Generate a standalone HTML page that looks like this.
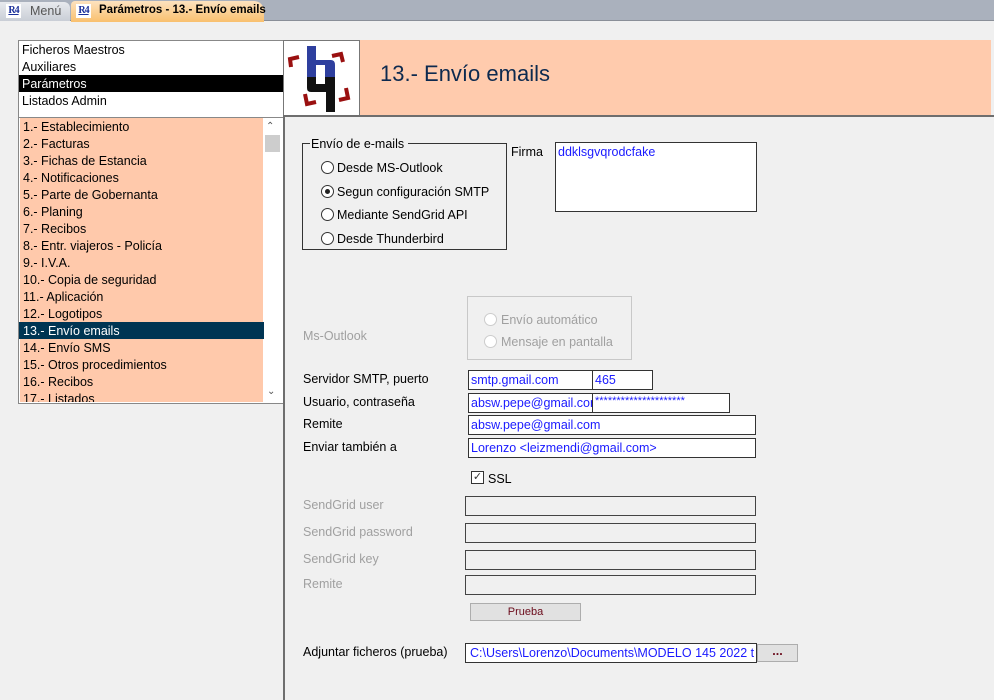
<!DOCTYPE html>
<html><head><meta charset="utf-8"><style>
*{box-sizing:border-box;margin:0;padding:0}
body{width:994px;height:700px;background:#f0f0f0;font-family:"Liberation Sans","DejaVu Sans",sans-serif;font-size:12.5px;color:#000;position:relative;overflow:hidden}
.a{position:absolute;white-space:nowrap}
.t{margin-top:1px}
.ico{position:absolute;width:15px;height:14px;background:#fff;color:#1a2f9a;font:bold 10px "Liberation Serif",serif;text-align:center;line-height:13px;text-decoration:underline;letter-spacing:-1px}
.inp{position:absolute;background:#fff;border:1px solid #333;color:#1a1aff;padding-left:2px;padding-top:1px;line-height:17px;overflow:hidden;white-space:nowrap}
.dis{position:absolute;background:#f0f0f0;border:1px solid #444}
.rad{position:absolute;width:13px;height:13px;border:1px solid #333;border-radius:50%;background:#fff}
.g{color:#a0a0a0}
.li{position:absolute;left:23px;height:17px;line-height:19px}
</style></head><body>
<div class="a" style="left:0;top:0;width:994px;height:21px;background:#aab1bd;border-bottom:1px solid #8a8f98"></div>
<div class="a" style="left:0;top:2px;width:70px;height:19px;background:linear-gradient(#e8eaee,#c9ced6);border-radius:0 6px 0 0"></div>
<div class="ico" style="left:6px;top:4px">R4</div>
<div class="a" style="left:30px;top:4px;color:#555">Menú</div>
<div class="a" style="left:71px;top:1px;width:193px;height:21px;background:linear-gradient(#fde2bf,#f9c06e);border-radius:4px 10px 0 0"></div>
<div class="ico" style="left:76px;top:4px">R4</div>
<div class="a" style="left:99px;top:4px;font-weight:bold;font-size:11.5px">Parámetros - 13.- Envío emails</div>

<div class="a" style="left:18px;top:40px;width:266px;height:78px;background:#fff;border:1px solid #888;border-right:none"></div>
<div class="li" style="left:22px;top:41px">Ficheros Maestros</div>
<div class="li" style="left:22px;top:58px">Auxiliares</div>
<div class="a" style="left:19px;top:75px;width:264px;height:17px;background:#000"></div>
<div class="li" style="left:22px;top:75px;color:#fff">Parámetros</div>
<div class="li" style="left:22px;top:92px">Listados Admin</div>

<div class="a" style="left:283px;top:40px;width:77px;height:76px;background:#fff;border:1px solid #777"></div>
<svg class="a" style="left:283px;top:40px" width="77" height="76" viewBox="0 0 77 76">
<path d="M8 27 L7 19 L16 17" stroke="#9a1010" stroke-width="4" fill="none"/>
<path d="M49 16 L58 14 L60 22" stroke="#9a1010" stroke-width="4" fill="none"/>
<path d="M22 54 L24 64 L33 62" stroke="#9a1010" stroke-width="4" fill="none"/>
<path d="M63 48 L65 58 L56 60" stroke="#9a1010" stroke-width="4" fill="none"/>
<path d="M24 6 H33 V20 H48 Q52 20 52 25 V37 H24 Z" fill="#2e3f9e"/>
<path d="M24 37 H52 V72 H43 V52 H28 Q24 52 24 48 Z" fill="#111"/>
<rect x="33" y="25" width="9" height="19" fill="#fff"/>
</svg>
<div class="a" style="left:360px;top:40px;width:631px;height:75px;background:#ffcbad"></div>
<div class="a" style="left:380px;top:61px;font-size:22px;color:#0d2a4f">13.- Envío emails</div>
<div class="a" style="left:283px;top:115px;width:711px;height:2px;background:#6e6e6e"></div>
<div class="a" style="left:283px;top:115px;width:2px;height:585px;background:#6e6e6e"></div>

<div class="a" style="left:18px;top:117px;width:265px;height:287px;background:#fff;border:1px solid #888;border-right:none"></div>
<div class="a" style="left:20px;top:118px;width:243px;height:284px;background:#ffc9ab"></div>
<div class="a" style="left:19px;top:322px;width:245px;height:17px;background:#003553"></div>
<div class="a" style="left:266px;top:121px;font-size:10px;color:#555">&#8963;</div>
<div class="a" style="left:265px;top:135px;width:15px;height:17px;background:#cdcdcd"></div>
<div class="a" style="left:267px;top:386px;font-size:10px;color:#555">&#8964;</div>
<div class="li" style="top:118px">1.- Establecimiento</div>
<div class="li" style="top:135px">2.- Facturas</div>
<div class="li" style="top:152px">3.- Fichas de Estancia</div>
<div class="li" style="top:169px">4.- Notificaciones</div>
<div class="li" style="top:186px">5.- Parte de Gobernanta</div>
<div class="li" style="top:203px">6.- Planing</div>
<div class="li" style="top:220px">7.- Recibos</div>
<div class="li" style="top:237px">8.- Entr. viajeros - Policía</div>
<div class="li" style="top:254px">9.- I.V.A.</div>
<div class="li" style="top:271px">10.- Copia de seguridad</div>
<div class="li" style="top:288px">11.- Aplicación</div>
<div class="li" style="top:305px">12.- Logotipos</div>
<div class="li" style="top:322px;color:#fff">13.- Envío emails</div>
<div class="li" style="top:339px">14.- Envío SMS</div>
<div class="li" style="top:356px">15.- Otros procedimientos</div>
<div class="li" style="top:373px">16.- Recibos</div>
<div class="a" style="left:23px;top:390px;height:12px;overflow:hidden;line-height:19px">17.- Listados</div>

<div class="a" style="left:302px;top:143px;width:205px;height:107px;border:1px solid #333"></div>
<div class="a t" style="left:310px;top:136px;background:#f0f0f0;padding:0 4px 0 1px">Envío de e-mails</div>
<div class="rad" style="left:321px;top:161px"></div><div class="a t" style="left:337px;top:160px">Desde MS-Outlook</div>
<div class="rad" style="left:321px;top:185px"></div><div class="a" style="left:325px;top:189px;width:5px;height:5px;border-radius:50%;background:#222"></div><div class="a t" style="left:337px;top:184px">Segun configuración SMTP</div>
<div class="rad" style="left:321px;top:208px"></div><div class="a t" style="left:337px;top:207px">Mediante SendGrid API</div>
<div class="rad" style="left:321px;top:232px"></div><div class="a t" style="left:337px;top:231px">Desde Thunderbird</div>
<div class="a t" style="left:511px;top:144px">Firma</div>
<div class="inp" style="left:555px;top:142px;width:202px;height:70px">ddklsgvqrodcfake</div>

<div class="a g t" style="left:303px;top:328px">Ms-Outlook</div>
<div class="a" style="left:467px;top:296px;width:165px;height:64px;border:1px solid #c8c8c8"></div>
<div class="rad" style="left:484px;top:313px;border-color:#ccc"></div><div class="a g t" style="left:501px;top:312px">Envío automático</div>
<div class="rad" style="left:484px;top:335px;border-color:#ccc"></div><div class="a g t" style="left:501px;top:334px">Mensaje en pantalla</div>

<div class="a t" style="left:303px;top:371px">Servidor SMTP, puerto</div>
<div class="inp" style="left:468px;top:370px;width:125px;height:20px">smtp.gmail.com</div>
<div class="inp" style="left:592px;top:370px;width:61px;height:20px">465</div>
<div class="a t" style="left:303px;top:394px">Usuario, contraseña</div>
<div class="inp" style="left:468px;top:393px;width:125px;height:20px">absw.pepe@gmail.com</div>
<div class="inp" style="left:592px;top:393px;width:138px;height:20px;line-height:13px;font-size:11px">*********************</div>
<div class="a t" style="left:303px;top:416px">Remite</div>
<div class="inp" style="left:468px;top:415px;width:288px;height:20px">absw.pepe@gmail.com</div>
<div class="a t" style="left:303px;top:439px">Enviar también a</div>
<div class="inp" style="left:468px;top:438px;width:288px;height:20px">Lorenzo &lt;leizmendi@gmail.com&gt;</div>

<div class="a" style="left:471px;top:471px;width:13px;height:13px;border:1px solid #333;background:#fff;font-size:11px;line-height:11px;text-align:center;color:#333">✓</div>
<div class="a t" style="left:488px;top:471px">SSL</div>

<div class="a g t" style="left:303px;top:497px">SendGrid user</div>
<div class="dis" style="left:465px;top:496px;width:291px;height:20px"></div>
<div class="a g t" style="left:303px;top:524px">SendGrid password</div>
<div class="dis" style="left:465px;top:523px;width:291px;height:20px"></div>
<div class="a g t" style="left:303px;top:551px">SendGrid key</div>
<div class="dis" style="left:465px;top:550px;width:291px;height:20px"></div>
<div class="a g t" style="left:303px;top:576px">Remite</div>
<div class="dis" style="left:465px;top:575px;width:291px;height:20px"></div>
<div class="a" style="left:470px;top:603px;width:111px;height:18px;background:#e1e1e1;border:1px solid #adadad;text-align:center;line-height:16px;font-size:11px;color:#6a0a1a">Prueba</div>

<div class="a t" style="left:303px;top:644px">Adjuntar ficheros (prueba)</div>
<div class="inp" style="left:465px;top:643px;width:292px;height:20px;padding-left:4px">C:\Users\Lorenzo\Documents\MODELO 145 2022 t</div>
<div class="a" style="left:757px;top:644px;width:41px;height:18px;background:#e1e1e1;border:1px solid #adadad;text-align:center;line-height:12px;font-weight:bold;color:#6a0a1a">...</div>
</body></html>
